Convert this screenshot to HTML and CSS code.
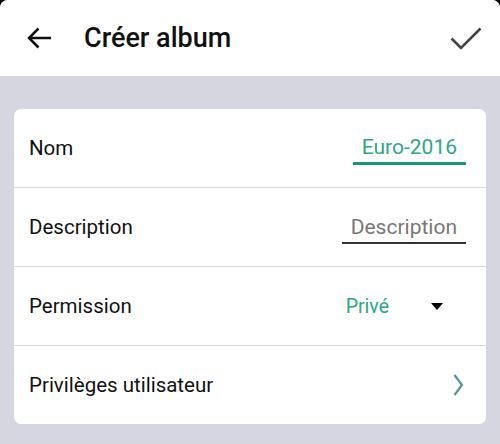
FILE: index.html
```html
<!DOCTYPE html>
<html lang="fr">
<head>
    <meta charset="UTF-8"/>
    <meta name="viewport" content="width=device-width, initial-scale=1.0"/>
    <title>Créer album</title>
    <link rel="stylesheet" href="styles.css">
</head>
<body>
<div class="screen">
    <!-- barre du haut -->
    <div class="topbar">
        <button class="icon-btn back">
            <svg width="24" height="22" viewBox="0 0 24 22"><path d="M24 11H2.5M11.5 1.5L2 11l9.5 9.5" fill="none" stroke="#111" stroke-width="2.5"/></svg>
        </button>
        <div class="title">Créer album</div>
        <button class="icon-btn check">
            <svg width="32" height="24" viewBox="0 0 32 24"><path d="M1.5 12.5l9.5 9.5L30.5 2.5" fill="none" stroke="#444" stroke-width="2.6"/></svg>
        </button>
    </div>

    <!-- formulaire -->
    <div class="content">
        <div class="card">
            <div class="row">
                <span class="label">Nom</span>
                <span class="field field-active">Euro-2016</span>
            </div>
            <div class="row">
                <span class="label">Description</span>
                <span class="field field-empty">Description</span>
            </div>
            <div class="row">
                <span class="label">Permission</span>
                <span class="select">
                    <span class="select-value">Privé</span>
                    <span class="caret"></span>
                </span>
            </div>
            <div class="row">
                <span class="label">Privilèges utilisateur</span>
                <svg class="chevron" width="11" height="22" viewBox="0 0 11 22"><path d="M1.5 1l7.5 10L1.5 21" fill="none" stroke="#4f9696" stroke-width="2.2"/></svg>
            </div>
        </div>
    </div>
</div>
</body>
</html>
```

FILE: styles.css
```css
body {
    margin: 0;
    background-color: #000;
    font-family: Roboto, "Liberation Sans", sans-serif;
}

.screen {
    width: 500px;
    height: 444px;
    background-color: #d6d6e0;
    border-radius: 8px 8px 0 0;
    overflow: hidden;
}

.topbar {
    height: 76px;
    background-color: #fff;
    display: flex;
    align-items: center;
    padding: 0 18px 0 27px;
    box-sizing: border-box;
}

.icon-btn {
    border: none;
    background: none;
    padding: 0;
    display: flex;
    cursor: pointer;
}

.title {
    flex: 1;
    margin-left: 33px;
    font-size: 27px;
    font-weight: 500;
    color: #111;
    margin-top: -1px;
}

.content {
    padding: 33px 14px 0 14px;
}

.card {
    background-color: #fff;
    border-radius: 7px;
}

.row {
    height: 79px;
    display: flex;
    align-items: center;
    justify-content: space-between;
    padding: 0 20px 0 15px;
    border-bottom: 1px solid #d8d8dc;
    box-sizing: border-box;
}

.row:last-child {
    border-bottom: none;
    height: 78px;
}

.label {
    font-size: 20.5px;
    color: #111;
}

.field {
    font-size: 21px;
    padding: 0 9px 3px 9px;
    margin-top: 4px;
}

.field-active {
    color: #2aa886;
    border-bottom: 3px solid #17937f;
}

.field-empty {
    color: #777;
    border-bottom: 2px solid #333;
}

.select {
    display: flex;
    align-items: center;
    margin-right: 23px;
}

.select-value {
    font-size: 19.5px;
    color: #2aa886;
}

.caret {
    width: 0;
    height: 0;
    border-left: 6px solid transparent;
    border-right: 6px solid transparent;
    border-top: 7px solid #000;
    margin-left: 42px;
}

.chevron {
    margin-right: 2px;
}
```
